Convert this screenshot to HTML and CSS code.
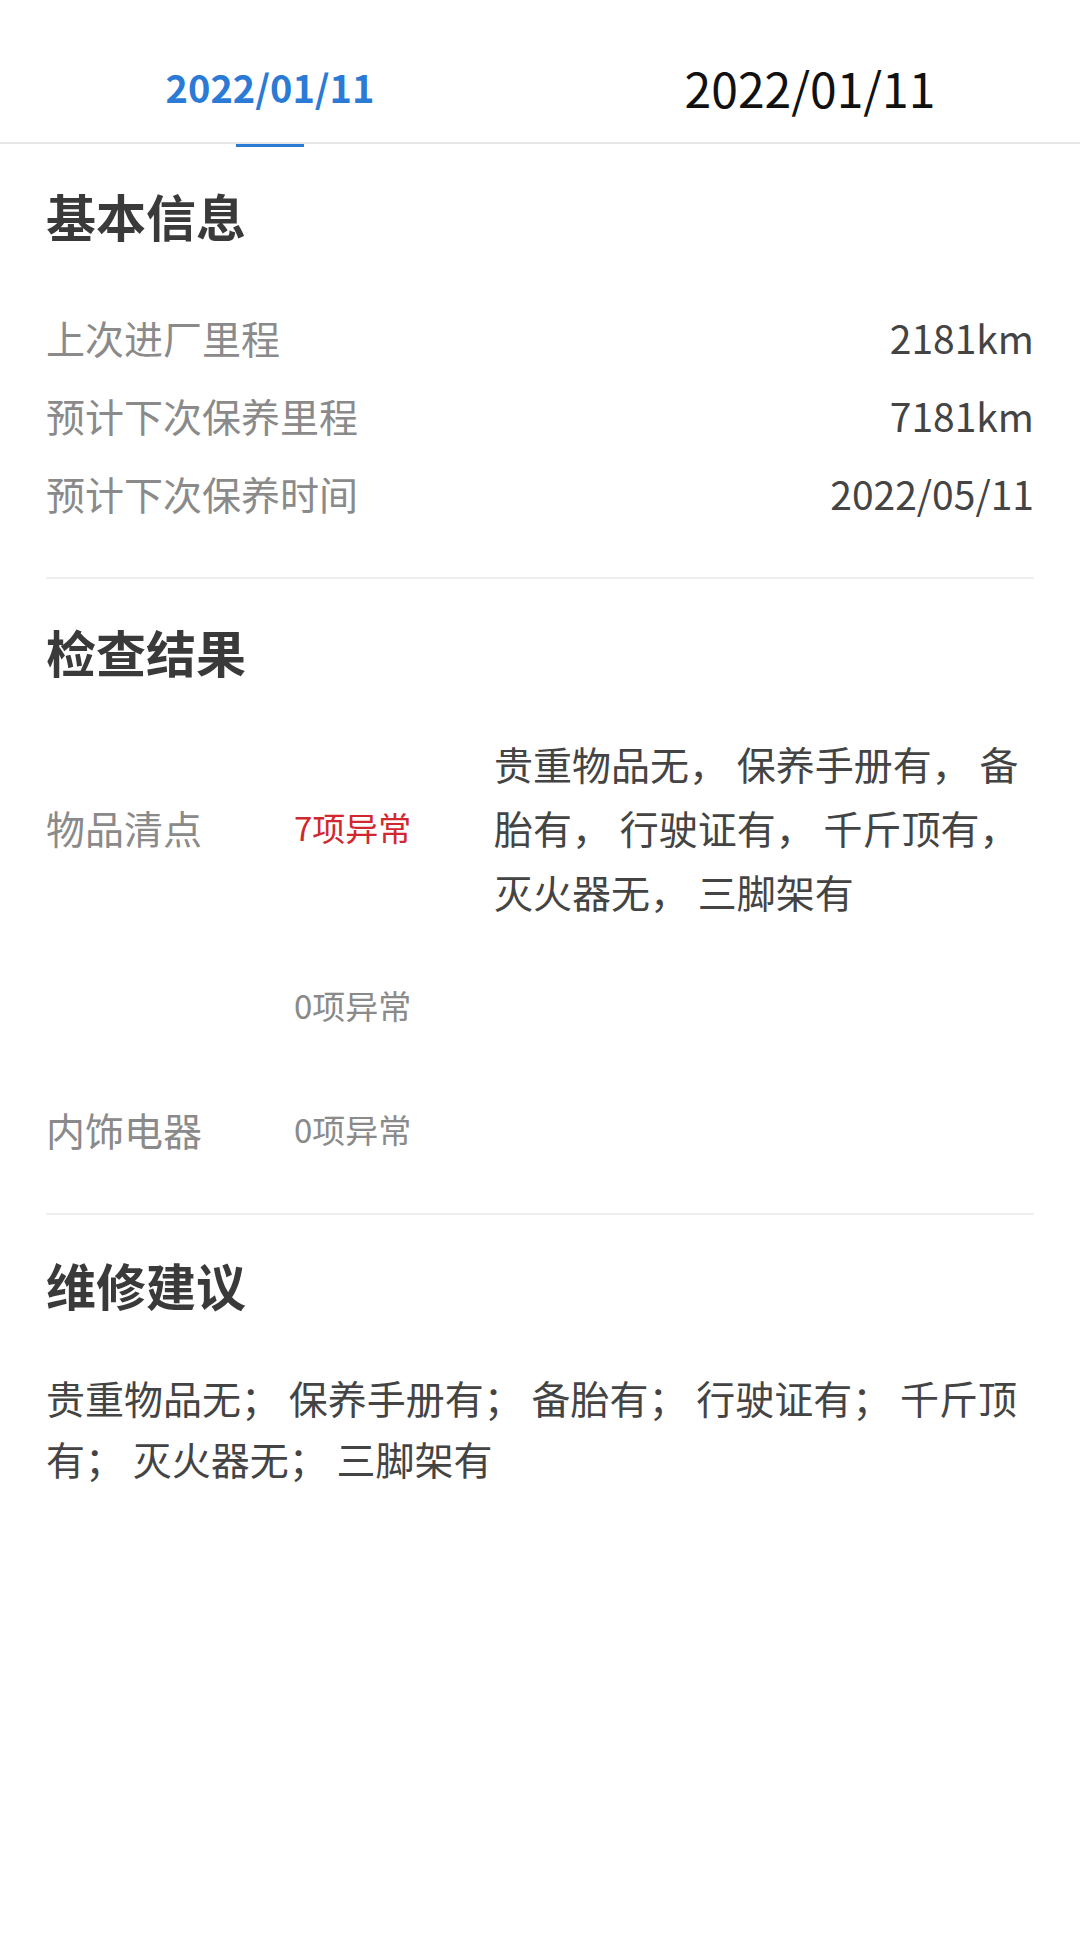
FILE: index.html
```html
<!DOCTYPE html>
<html lang="zh-CN">
<head>
<meta charset="utf-8">
<title>保养报告</title>
<link rel="stylesheet" href="styles.css">
</head>
<body>
<div class="tabs">
  <div class="tab active"><span>2022/01/11</span></div>
  <div class="tab"><span>2022/01/11</span></div>
</div>

<section class="section">
  <h2 class="title">基本信息</h2>
  <div class="kv-list">
    <div class="kv"><span class="kv-label">上次进厂里程</span><span class="kv-value">2181km</span></div>
    <div class="kv"><span class="kv-label">预计下次保养里程</span><span class="kv-value">7181km</span></div>
    <div class="kv"><span class="kv-label">预计下次保养时间</span><span class="kv-value">2022/05/11</span></div>
  </div>
</section>

<section class="section">
  <h2 class="title">检查结果</h2>
  <div class="check-list">
    <div class="check">
      <span class="check-label">物品清点</span>
      <span class="check-status warn">7项异常</span>
      <span class="check-desc">贵重物品无， 保养手册有， 备胎有， 行驶证有， 千斤顶有， 灭火器无， 三脚架有</span>
    </div>
    <div class="check">
      <span class="check-label"></span>
      <span class="check-status">0项异常</span>
      <span class="check-desc"></span>
    </div>
    <div class="check">
      <span class="check-label">内饰电器</span>
      <span class="check-status">0项异常</span>
      <span class="check-desc"></span>
    </div>
  </div>
</section>

<section class="section last">
  <h2 class="title">维修建议</h2>
  <div class="advice-wrap">
    <p class="advice">贵重物品无； 保养手册有； 备胎有； 行驶证有； 千斤顶有； 灭火器无； 三脚架有</p>
  </div>
</section>
</body>
</html>
```

FILE: styles.css
```css
* {
  box-sizing: border-box;
}

html, body {
  margin: 0;
  padding: 0;
  background: #ffffff;
}

body {
  width: 1080px;
  min-height: 1952px;
  font-family: "Noto Sans CJK SC", "Noto Sans", sans-serif;
  color: #444444;
}

.tabs {
  display: flex;
  height: 144px;
  border-bottom: 2px solid #e6e6e6;
}

.tab {
  position: relative;
  flex: 1;
  display: flex;
  align-items: center;
  justify-content: center;
  padding-top: 32px;
  font-size: 48px;
  line-height: 1;
  color: #111111;
}

.tab.active {
  font-size: 38px;
  font-weight: 700;
  color: #2b7bd6;
}

.tab.active::after {
  content: "";
  position: absolute;
  left: 236px;
  bottom: -5px;
  width: 68px;
  height: 3px;
  background: #2b7bd6;
}

.section {
  margin: 0 46px;
  padding: 41px 0 22px;
  border-bottom: 2px solid #eeeeee;
}

.section + .section {
  padding-top: 42px;
}

.section.last {
  padding-top: 39px;
  border-bottom: none;
}

.title {
  margin: 0 0 22px;
  font-size: 50px;
  line-height: 60px;
  font-weight: 700;
  color: #3a3a3a;
}

.kv-list {
  display: flex;
  flex-direction: column;
  padding: 31px 0 23px;
}

.kv {
  display: flex;
  justify-content: space-between;
  align-items: center;
  height: 78px;
  font-size: 39px;
  line-height: 78px;
}

.kv-label {
  color: #8a8a8a;
}

.kv-value {
  color: #444444;
}

.check-list {
  display: flex;
  flex-direction: column;
}

.check {
  display: grid;
  grid-template-columns: 248px 200px 1fr;
  align-items: center;
  padding: 28px 0;
}

.check:first-child {
  padding-bottom: 22px;
}

.check:nth-child(2) {
  padding-bottom: 32px;
}

.check:last-child {
  padding-bottom: 30px;
}

.check-label {
  font-size: 39px;
  line-height: 64px;
  color: #8a8a8a;
}

.check-status {
  font-size: 33px;
  line-height: 64px;
  color: #8a8a8a;
}

.check-status.warn {
  color: #d0282e;
}

.check-desc {
  min-height: 64px;
  font-size: 39px;
  line-height: 64px;
  color: #444444;
}

.advice-wrap {
  padding-top: 31px;
}

.advice {
  margin: 0;
  font-size: 39px;
  line-height: 61px;
  color: #444444;
}
```
